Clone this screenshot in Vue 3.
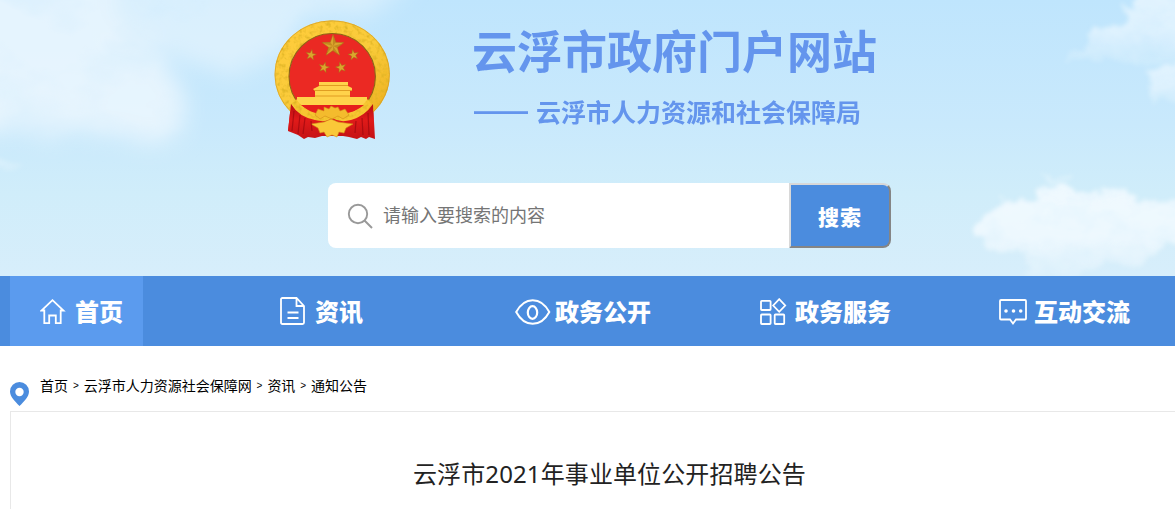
<script setup>
import { ref } from 'vue'

const keyword = ref('')

const navs = [
  { name: '首页', icon: 'home', active: true },
  { name: '资讯', icon: 'doc' },
  { name: '政务公开', icon: 'eye' },
  { name: '政务服务', icon: 'grid' },
  { name: '互动交流', icon: 'chat' }
]

const crumbs = ['首页', '云浮市人力资源社会保障网', '资讯', '通知公告']

// five-pointed star, returned as polygon points
function star(cx, cy, r, turn = 0) {
  const pts = []
  for (let i = 0; i < 10; i++) {
    const a = (-90 + turn + i * 36) * Math.PI / 180
    const d = i % 2 ? r * 0.4 : r
    pts.push((cx + d * Math.cos(a)).toFixed(2) + ',' + (cy + d * Math.sin(a)).toFixed(2))
  }
  return pts.join(' ')
}

const stars = [
  star(68, 36, 11.5),
  star(46, 45, 5.5, 10),
  star(88.5, 45, 5.5, -10),
  star(59, 57.5, 5.5, 14),
  star(76, 57.5, 5.5, -14)
]
</script>

<template>
  <div class="page">
    <header class="banner">
      <svg class="sky" width="1175" height="276" viewBox="0 0 1175 276">
        <defs>
          <filter id="soft" filterUnits="userSpaceOnUse" x="-60" y="-60" width="560" height="300">
            <feTurbulence type="fractalNoise" baseFrequency="0.03" numOctaves="4" seed="4" />
            <feDisplacementMap in="SourceGraphic" scale="26" xChannelSelector="R" yChannelSelector="G" />
            <feGaussianBlur stdDeviation="11" result="b" />
            <feTurbulence type="fractalNoise" baseFrequency="0.012 0.018" numOctaves="4" seed="12" />
            <feColorMatrix values="0 0 0 0 1  0 0 0 0 1  0 0 0 0 1  2.4 0 0 0 -.35" />
            <feComposite in="b" operator="in" result="m" />
            <feComposite in="b" in2="m" operator="arithmetic" k2=".65" k3=".25" />
          </filter>
          <filter id="puff" filterUnits="userSpaceOnUse" x="-40" y="-40" width="1260" height="340">
            <feTurbulence type="fractalNoise" baseFrequency="0.07" numOctaves="5" seed="8" />
            <feDisplacementMap in="SourceGraphic" scale="20" xChannelSelector="R" yChannelSelector="G" />
            <feGaussianBlur stdDeviation="1.9" result="b" />
            <feTurbulence type="fractalNoise" baseFrequency="0.03 0.04" numOctaves="4" seed="21" />
            <feColorMatrix values="0 0 0 0 1  0 0 0 0 1  0 0 0 0 1  2.4 0 0 0 -.4" />
            <feComposite in2="b" operator="in" result="m" />
            <feComposite in="b" in2="m" operator="arithmetic" k2=".7" k3=".2" />
          </filter>
          <linearGradient id="fade" x1="0" y1="0" x2="0" y2="1">
            <stop offset="0" stop-color="#f2faff" stop-opacity=".95" />
            <stop offset=".55" stop-color="#f2faff" stop-opacity=".85" />
            <stop offset="1" stop-color="#f2faff" stop-opacity=".15" />
          </linearGradient>
        </defs>
        <g fill="#f0f8fe" filter="url(#soft)">
          <path opacity=".85" d="M-50-50H110L120 18 145 40 166 66 182 90 182 120 174 142 140 142 90 134 40 132-50 130Z" />
          <path opacity=".6" d="M90-50H440L380 12 300 28 275 60 240 76 200 66 120 40Z" />
        </g>
        <g fill="url(#fade)" filter="url(#puff)">
          <path d="M1136-12H1190V66L1150 60 1110 62 1060 60 1072 52 1092 44 1090 34 1106 26 1126 22 1128 10Z" opacity=".75" />
          <path d="M1146 70 1190 62V106L1154 102Z" opacity=".7" />
          <path d="M974 238 980 220 992 210 1003 198 1014 204 1034 200 1040 188 1060 184 1078 194 1100 194 1106 188 1124 192 1134 202 1152 198 1160 204 1190 194V240L1164 244 1156 256 1138 266 1110 262 1080 272 1058 280 1030 280 1024 252 1000 248Z" />
          <path d="M1040 174 1074 174 1070 181 1046 181Z" opacity=".6" />
          <path d="M-10 160 10 158 28 164 18 172-10 168Z" opacity=".4" />
        </g>
      </svg>

      <div class="brand">
        <svg class="emblem" width="135" height="140" viewBox="0 0 135 140">
          <defs>
            <linearGradient id="gold" x1="0" y1="0" x2="1" y2="1">
              <stop offset="0" stop-color="#ffcc3b" />
              <stop offset=".55" stop-color="#f9cb3a" />
              <stop offset="1" stop-color="#edaf20" />
            </linearGradient>
            <linearGradient id="cloth" x1="0" y1="0" x2="0" y2="1">
              <stop offset="0" stop-color="#b80d12" />
              <stop offset=".5" stop-color="#e01a19" />
              <stop offset="1" stop-color="#c51215" />
            </linearGradient>
            <filter id="relief" filterUnits="userSpaceOnUse" x="0" y="0" width="135" height="140">
              <feTurbulence type="fractalNoise" baseFrequency=".24" numOctaves="2" seed="3" />
              <feColorMatrix values="0 0 0 0 .72  0 0 0 0 .45  0 0 0 0 .02  2.4 0 0 0 -1.1" />
              <feComposite in2="SourceGraphic" operator="in" result="n" />
              <feMerge>
                <feMergeNode in="SourceGraphic" />
                <feMergeNode in="n" />
              </feMerge>
            </filter>
          </defs>
          <path fill="url(#cloth)" d="M26 94 45 106H90L108 94 110 129 104 127 101 129 96 127 92 129 84 127 78 126H57L50 128 43 127 39 129 33 125 23 121Z" />
          <ellipse cx="67.2" cy="64.500" rx="50.300" ry="46.800" fill="none" stroke="url(#gold)" stroke-width="14.500" filter="url(#relief)" />
          <ellipse cx="67.2" cy="64.500" rx="57.300" ry="53.700" fill="none" stroke="#cf9620" stroke-width=".6" />
          <ellipse cx="67.2" cy="66.500" rx="43.200" ry="43" fill="#eb2923" stroke="#8c6515" stroke-width="1.1" />
          <g fill="#dba52d" stroke="#a56e16" stroke-width=".5">
            <polygon v-for="(p, i) in stars" :key="i" :points="p" />
          </g>
          <path fill="#b57b18" d="M68 36V24.500L71 32ZM68 36 79 33 72 38ZM68 36 74 45 68 41ZM68 36 61 45 63.500 37.500ZM68 36 57 33 65 32Z" opacity=".65" />
          <path fill="#ffd34b" d="M54 72H83V76L87 78V81H85V87H102V95H32V87H50V81L48 79 54 76Z" />
          <path d="M54 75.500H83M49 80.500H87M50 86H85" stroke="#d89118" stroke-width=".8" fill="none" />
          <path d="M28 94C38 112 52 114 67 114S98 111 106 94L103 89C94 100 85 105 67 105S41 101 31 89Z" fill="#f8c633" filter="url(#relief)" />
          <path fill="#e61e1b" d="M36 95H99Q88 104 77 102L67 97 57 102Q47 104 36 95Z" />
          <path fill="url(#cloth)" d="M26 94Q34 107 50 110 61 113 67 108 75 113 86 110 100 106 108 94L109 125 104 127 101 122 96 127 90 122 82 126H55L48 121 43 127 37 122 23 121Z" />
          <path fill="#f4bb2d" stroke="#d28c17" stroke-width=".6" d="M50 105 53 99 59 101 59 97 64 99 66 96 70 98 73 97 75 101 80 99 84 105 78 109 73 106 67 109 60 106 55 109Z" />
          <path fill="#fac838" stroke="#d28c17" stroke-width=".6" d="M46 114 59 112 66 109 73 112 88 114 81 118 79 123 74 122 72 127 67 125 62 127 59 122 55 123 53 118Z" />
          <path stroke="#9b090e" stroke-width="1.2" fill="none" opacity=".7" d="M29 101 27 121M35 105 33 124M40 108 38 124M46 111 47 121M91 111 90 123M97 108 98 125M103 103 104 125" />
        </svg>
        <div class="brand-text">
          <h1>云浮市政府门户网站</h1>
          <p><span class="dash">——</span>云浮市人力资源和社会保障局</p>
        </div>
      </div>

      <form class="search" @submit.prevent>
        <label class="field">
          <svg width="26" height="26" viewBox="0 0 26 26" fill="none" stroke="#999" stroke-width="1.9">
            <circle cx="11" cy="11" r="9.200" />
            <path d="M17.500 17.500 25 25" />
          </svg>
          <input v-model="keyword" type="text" placeholder="请输入要搜索的内容">
        </label>
        <button type="submit">搜索</button>
      </form>
    </header>

    <nav class="nav">
      <div v-for="item in navs" :key="item.name" class="cell">
        <a :class="['link', item.icon, { active: item.active }]">
          <svg v-if="item.icon === 'home'" width="26" height="26" viewBox="0 0 26 26">
            <path d="M4.300 11.500H1.500L12.500 1.200 23.500 11.500H20.700V24.200H15.800V16.500H9.200V24.200H4.300Z" />
          </svg>
          <svg v-else-if="item.icon === 'doc'" width="26" height="28" viewBox="0 0 26 28">
            <path d="M2.500 1H16.500L24 9V25.500Q24 27 22.500 27H2.500Q1 27 1 25.500V2.500Q1 1 2.500 1ZM16.500 1V9H24M7.500 15.500H18.500M7.500 21H18.500" />
          </svg>
          <svg v-else-if="item.icon === 'eye'" width="36" height="26" viewBox="0 0 36 26">
            <path d="M1.200 13C5.500 5 11 1.200 17.700 1.200S30 5 34.300 13C30 21 24.500 24.800 17.700 24.800S5.500 21 1.200 13Z" stroke-width="2" />
            <ellipse cx="17.500" cy="13.500" rx="4.700" ry="6.300" stroke-width="2.200" />
          </svg>
          <svg v-else-if="item.icon === 'grid'" width="27" height="27" viewBox="0 0 27 27">
            <rect x="1" y="2.800" width="9.600" height="9.200" rx=".8" />
            <rect x="1" y="16.500" width="9.600" height="9.500" rx=".8" />
            <rect x="14.700" y="16.500" width="9.500" height="9.500" rx=".8" />
            <path d="M19.200 1.200 25.200 7.500 19.200 13.800 13.200 7.500Z" />
          </svg>
          <svg v-else width="28" height="26" viewBox="0 0 28 26">
            <path d="M2 1H26Q27 1 27 2V19.500Q27 20.500 26 20.500H17L14 24.500 11 20.500H2Q1 20.500 1 19.500V2Q1 1 2 1Z" />
            <g fill="#fff" stroke="none">
              <circle cx="7" cy="12" r="1.800" />
              <circle cx="14.500" cy="12" r="1.800" />
              <circle cx="21.700" cy="12" r="1.800" />
            </g>
          </svg>
          <span>{{ item.name }}</span>
        </a>
      </div>
    </nav>

    <div class="crumbs">
      <svg width="20" height="25" viewBox="0 0 20 25">
        <path fill="#4b8cde" fill-rule="evenodd" d="M9.500 0A9.500 9.500 0 0 1 19 9.500C19 14.500 14.500 19 9.500 24 4.500 19 0 14.500 0 9.500A9.500 9.500 0 0 1 9.500 0ZM9.500 5.800A4.200 4.200 0 1 0 9.500 14.200 4.200 4.200 0 1 0 9.500 5.800Z" />
      </svg>
      <div class="trail">
        <template v-for="(c, i) in crumbs" :key="c">
          <i v-if="i">&gt;</i>
          <a>{{ c }}</a>
        </template>
      </div>
    </div>

    <main class="article">
      <h2>云浮市2021年事业单位公开招聘公告</h2>
    </main>
  </div>
</template>

<style>
body {
  margin: 0;
  overflow: hidden;
  background: #fff;
}
</style>

<style scoped>
.page {
  width: 1175px;
  height: 509px;
  overflow: hidden;
  display: flex;
  flex-direction: column;
  font-family: "Noto Sans", "Noto Sans CJK SC", sans-serif;
}

.page svg {
  display: block;
  flex: none;
}

.banner {
  position: relative;
  height: 276px;
  flex: none;
  background: linear-gradient(#bfe5fd 0, #c9e9fc 45%, #d0edfa 70%, #d7eefb 100%);
}

.sky {
  position: absolute;
  left: 0;
  top: 0;
}

.brand {
  position: relative;
  display: flex;
  height: 173px;
  padding: 10px 0 0 265px;
  box-sizing: border-box;
}

.brand-text {
  margin-left: 72px;
  color: #6495ed;
  white-space: nowrap;
}

.brand-text h1 {
  margin: 7px 0 0;
  font: bold 45px/66px "Noto Sans CJK SC", sans-serif;
}

.brand-text p {
  display: flex;
  margin: 9px 0 0;
  font: bold 25px/38px "Noto Sans CJK SC", sans-serif;
}

.dash {
  width: 62px;
  margin-left: 2px;
  font-family: "Liberation Sans", sans-serif;
  font-size: 27px;
}

.search {
  position: relative;
  display: flex;
  width: 563px;
  height: 65px;
  margin: 10px 0 0 328px;
}

.field {
  display: flex;
  flex: 1;
  align-items: center;
  padding: 0 0 2px 19px;
  border-radius: 8px 0 0 8px;
  background: #fff;
}

.field svg {
  margin-top: 2px;
}

.field input {
  width: 380px;
  margin: 0 0 2px 10px;
  padding: 0;
  border: 0;
  outline: 0;
  background: none;
  font: 18px "Noto Sans CJK SC", sans-serif;
}

.field input::placeholder {
  color: #757575;
}

.search button {
  width: 102px;
  padding: 0;
  border: 2px solid;
  border-color: #d8d8d8 #858585 #858585 #d8d8d8;
  border-radius: 0 8px 8px 0;
  background: #4b8cde;
  color: #fff;
  font: 900 21px "Noto Sans CJK SC", sans-serif;
  letter-spacing: 1px;
}

.nav {
  display: flex;
  flex: none;
  height: 70px;
  padding-left: 10px;
  background: #4b8cde;
}

.cell {
  display: flex;
  flex: none;
  width: 240px;
}

.link {
  display: flex;
  align-items: center;
  padding: 0 20px 0 30px;
  color: #fff;
  font: 900 24px/70px "Noto Sans CJK SC", sans-serif;
  white-space: nowrap;
}

.link svg {
  margin-right: 9px;
  fill: none;
  stroke: #fff;
  stroke-width: 1.8;
}

.link.active {
  background: #5b9bee;
}

.link.home svg {
  margin-top: 2px;
}

.link.eye {
  padding-left: 25px;
}

.link.eye svg {
  margin: 2px 4px 0 0;
}

.link.grid svg {
  margin-right: 8px;
}

.link.chat {
  padding-left: 29px;
}

.link.chat svg {
  margin: 2px 7px 0 0;
}

.crumbs {
  display: flex;
  flex: none;
  height: 65px;
  padding-left: 10px;
}

.crumbs > svg {
  margin-top: 36px;
}

.trail {
  display: flex;
  align-items: center;
  height: 20px;
  margin: 29px 0 0 10px;
  color: #000;
  font: 14px/20px "Noto Sans CJK SC", sans-serif;
}

.trail i {
  width: 15.700px;
  padding-top: 2px;
  text-align: center;
  font: 10px/20px "Liberation Sans", sans-serif;
}

.article {
  flex: 1;
  margin-left: 10px;
  border: solid #e8e8e8;
  border-width: 1px 0 0 1px;
}

.article h2 {
  margin: 44px 0 0 402px;
  color: #222;
  font-size: 24px;
  font-weight: 400;
  line-height: 36px;
  letter-spacing: .11px;
  white-space: nowrap;
}
</style>
